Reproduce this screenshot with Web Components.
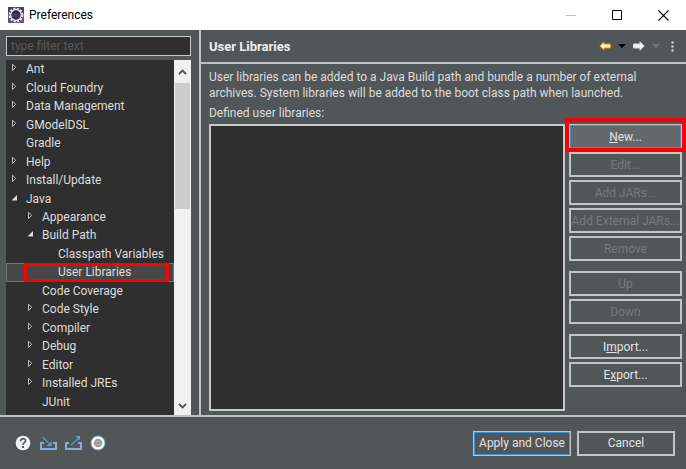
<!DOCTYPE html>
<html lang="en">
<head>
<meta charset="utf-8">
<title>Preferences</title>
<style>
html,body{margin:0;height:100%}
body{font:12px/16px Roboto,"Open Sans",sans-serif;color:#ddd;background:#515658}
</style>
</head>
<body>
<preferences-window></preferences-window>
<script>
const define = (name, html, setup) => {
  const t = document.createElement('template');
  t.innerHTML = '<style>*{box-sizing:border-box}:host{box-sizing:border-box}</style>' + html;
  customElements.define(name, class extends HTMLElement {
    connectedCallback() {
      if (this.shadowRoot) return;
      this.attachShadow({mode: 'open'}).append(t.content.cloneNode(true));
      if (setup) setup(this, this.shadowRoot);
    }
  });
};

define('title-bar', `
<style>
:host{display:flex;align-items:center;height:30px;padding-left:8px;background:#fff;color:#000}
h1{flex:1;margin:0 0 0 5px;font-size:12px;font-weight:400}
button{width:46px;height:30px;padding:0;border:0;background:none;display:grid;place-items:center}
svg{display:block}
</style>
<svg width="16" height="16" viewBox="0 0 16 16"><defs><linearGradient id="g" x2="0" y2="1"><stop stop-color="#4e3a70"/><stop offset="1" stop-color="#6b4f93"/></linearGradient></defs><rect width="16" height="16" fill="url(#g)"/><circle cx="8" cy="8" r="6.3" fill="none" stroke="#eee" stroke-width="2.2" stroke-dasharray="2 1.3"/><circle cx="8" cy="8" r="5.3" fill="#2c2845" stroke="#e6e6e6" stroke-width="1.2"/><path d="M4 7h8M4 9h8" stroke="#5d5c78" stroke-width=".8"/></svg>
<h1>Preferences</h1>
<button aria-label="Minimize" disabled><svg width="10" height="10"><path d="M0 5.500h10" stroke="#bbb"/></svg></button>
<button aria-label="Maximize"><svg width="10" height="10"><path d="M.5.5h9v9h-9z" fill="none" stroke="#000"/></svg></button>
<button aria-label="Close"><svg width="11" height="11"><path d="M.5.5l10 10M10.500.5l-10 10" stroke="#000" stroke-width="1.100"/></svg></button>
`);

define('tree-item', `
<style>
:host{display:flex;align-items:center;min-height:0;padding-left:calc(4px + 16px * var(--depth));border:1px solid transparent;position:relative;white-space:nowrap}
:host([selected]){background:#474747;border-color:#77776a}
svg{width:15px;height:12px;flex:none}
.mark{display:none}
:host([selected]) .mark{display:block;position:absolute;inset:-1px 4px -1px 17px;border:3px solid #f00}
</style>
<svg viewBox="0 0 15 12"></svg><slot></slot><span class="mark"></span>`, (el, root) => {
  el.style.setProperty('--depth', el.getAttribute('depth'));
  el.setAttribute('role', 'treeitem');
  const shapes = {
    closed: '<path d="M1.500 1.200v6.300l3.200-3.200z" fill="none" stroke="#bbb"/>',
    open: '<path d="M6 2v5.500H.5z" fill="#ddd"/>'
  };
  root.querySelector('svg').innerHTML = shapes[el.getAttribute('state')] || '';
});

define('nav-tree', `
<style>
:host{display:flex;min-height:0;background:#2f2f2f}
.items{flex:1;min-width:0;display:grid;grid-auto-rows:1fr;padding-bottom:4px;overflow:hidden}
.bar{width:17px;background:#f0f0f0;display:grid;grid-template-rows:23px 10fr 15fr 18px;justify-items:center;align-items:center}
.thumb{background:#cdcdcd;align-self:stretch;width:15px}
</style>
<div class="items" role="tree"></div>
<div class="bar"><svg width="9" height="6"><path d="M1 5l3.500-3.500L8 5" fill="none" stroke="#555" stroke-width="1.800"/></svg><div class="thumb"></div><i></i><svg width="9" height="6"><path d="M1 1l3.500 3.500L8 1" fill="none" stroke="#555" stroke-width="1.800"/></svg></div>
`, (el, root) => {
  const rows = [['Ant',0,'closed'],['Cloud Foundry',0,'closed'],['Data Management',0,'closed'],['GModelDSL',0,'closed'],['Gradle',0,''],['Help',0,'closed'],['Install/Update',0,'closed'],['Java',0,'open'],['Appearance',1,'closed'],['Build Path',1,'open'],['Classpath Variables',2,''],['User Libraries',2,''],['Code Coverage',1,''],['Code Style',1,'closed'],['Compiler',1,'closed'],['Debug',1,'closed'],['Editor',1,'closed'],['Installed JREs',1,'closed'],['JUnit',1,'']];
  root.querySelector('.items').innerHTML = rows.map(([name, depth, state]) =>
    `<tree-item depth="${depth}" state="${state}"${name === 'User Libraries' ? ' selected aria-selected="true"' : ''}>${name}</tree-item>`).join('');
});

define('pref-button', `
<style>
:host{display:block;position:relative}
button{display:block;width:100%;height:25px;padding:0;border:2px solid #c4c4c4;background:#515658;color:#e2e2e2;font:inherit;line-height:20px;white-space:nowrap}
button:disabled{color:#777b7c}
:host([primary]) button{border-color:#c4c4c4;outline:1px solid #3d90d6;outline-offset:-2px}
:host([hot]) button{background:#63686b}
.mark{display:none}
:host([hot]) .mark{display:block;position:absolute;inset:-6px -4px -3px;border:4px solid #f00}
</style>
<button type="button"><slot></slot></button><span class="mark"></span>`, (el, root) => {
  root.querySelector('button').disabled = el.hasAttribute('disabled');
});

define('side-pane', `
<style>
:host{display:flex;flex-direction:column;gap:4px;width:29%;padding:6px 8px 0 6px}
input{width:100%;height:20px;padding:0 4px;border:1px solid #c8c8c8;border-radius:0;background:#2f2f2f;color:#ddd;font:inherit;outline:0}
input::placeholder{color:#585858;opacity:1}
nav-tree{flex:1}
</style>
<input type="text" placeholder="type filter text" aria-label="Filter preferences">
<nav-tree></nav-tree>`);

define('page-header', `
<style>
:host{display:flex;align-items:center;height:34px;padding:0 6px 0 8px;border-bottom:2px solid #c0c2c3}
h2{flex:1;margin:0;font-size:13px;line-height:18px;font-weight:700;color:#f0f0f0;padding-top:2px}
button{border:0;background:none;padding:0;display:grid;place-items:center;height:16px}
.wide{width:18px}.slim{width:16px}.more{width:16px}
</style>
<h2><slot></slot></h2>
<button class="wide" aria-label="Back"><svg width="12" height="10"><path d="M.8 5L5 .8v2.200h6.500v4H5v2.200z" fill="#fff0b5" stroke="#d9931e"/></svg></button>
<button class="slim" aria-label="Back history"><svg width="8" height="4"><path d="M0 0h8L4 4z" fill="#000"/></svg></button>
<button class="wide" aria-label="Forward"><svg width="12" height="10"><path d="M11.200 5L7 .8v2.200H.5v4H7v2.200z" fill="#f4f4f4" stroke="#ddd"/></svg></button>
<button class="slim" aria-label="Forward history" disabled><svg width="8" height="4"><path d="M0 0h8L4 4z" fill="#74787a"/></svg></button>
<button class="more" aria-label="View menu"><svg width="3" height="11"><path d="M.5.500h2v2h-2zM.5 4.500h2v2h-2zM.5 8.500h2v2h-2z" fill="#e8e8e8"/></svg></button>
`);

define('library-page', `
<style>
:host{display:flex;flex-direction:column;flex:1;min-width:0;border-left:2px solid #c0c2c3}
.body{flex:1;display:flex;flex-direction:column;padding:5px 4px 4px 8px}
p{margin:0 0 4px}
.work{flex:1;display:flex;gap:4px;margin-top:3px}
.list{flex:1;border:2px solid #c8caca;background:#2f2f2f}
.actions{display:flex;flex-direction:column;gap:10px;width:113px}
.group{display:flex;flex-direction:column;gap:3px}
</style>
<page-header>User Libraries</page-header>
<div class="body">
<p>User libraries can be added to a Java Build path and bundle a number of external<br>archives. System libraries will be added to the boot class path when launched.</p>
<span id="label">Defined user libraries:</span>
<div class="work">
<div class="list" role="listbox" aria-labelledby="label" tabindex="0"></div>
<div class="actions">
<div class="group"><pref-button primary hot><u>N</u>ew...</pref-button><pref-button disabled>Edit...</pref-button><pref-button disabled>Add JARs...</pref-button><pref-button disabled>Add External JARs...</pref-button><pref-button disabled>Remove</pref-button></div>
<div class="group"><pref-button disabled>Up</pref-button><pref-button disabled>Down</pref-button></div>
<div class="group"><pref-button>I<u>m</u>port...</pref-button><pref-button>E<u>x</u>port...</pref-button></div>
</div></div></div>`);

define('dialog-footer', `
<style>
:host{display:flex;align-items:center;height:54px;padding:0 11px 0 15px;border-top:2px solid #c0c2c3}
.icons{display:flex;gap:9px;flex:1}
.icons button{width:16px;height:16px;padding:0;border:0;background:none}
.icons svg{display:block}
.actions{display:flex;gap:6px}
pref-button{width:98px}
</style>
<div class="icons">
<button aria-label="Help"><svg width="16" height="16"><circle cx="8" cy="8" r="7.300" fill="#f4f4f6"/><path d="M5.600 6.200C5.600 2.800 10.700 3 10.500 6 10.400 7.700 8 7.700 8 9.700" fill="none" stroke="#4c5678" stroke-width="1.700"/><path d="M7.100 11h1.900v1.900H7.100z" fill="#4c5678"/></svg></button>
<button aria-label="Import preferences"><svg width="17" height="16"><path d="M4 8H1v6h15V8h-3" fill="none" stroke="#8faad8" stroke-width="2"/><path d="M2.500 2l7 7" stroke="#4d9bc2" stroke-width="1.300"/><path d="M11.500 6.500v4.500H7z" fill="#5ba6cc"/></svg></button>
<button aria-label="Export preferences"><svg width="17" height="16"><path d="M4 8H1v6h15V8h-3" fill="none" stroke="#8faad8" stroke-width="2"/><path d="M6 10l8-7" stroke="#4d9bc2" stroke-width="1.300"/><path d="M10.500 1H15v4.500z" fill="#5ba6cc"/></svg></button>
<button aria-label="Oomph recorder"><svg width="16" height="16"><circle cx="8" cy="8" r="6.900" fill="#fff" stroke="#83b5dc"/><circle cx="8" cy="8" r="4.300" fill="#999"/><path d="M5 6.500h6M5 9.500h6" stroke="#b5b5b5"/></svg></button>
</div>
<div class="actions"><pref-button primary>Apply and Close</pref-button><pref-button>Cancel</pref-button></div>`);

define('preferences-window', `
<style>
:host{display:flex;flex-direction:column;min-height:100vh;background:#515658}
main{flex:1;display:flex}
</style>
<title-bar></title-bar>
<main><side-pane></side-pane><library-page></library-page></main>
<dialog-footer></dialog-footer>`);
</script>
</body>
</html>
